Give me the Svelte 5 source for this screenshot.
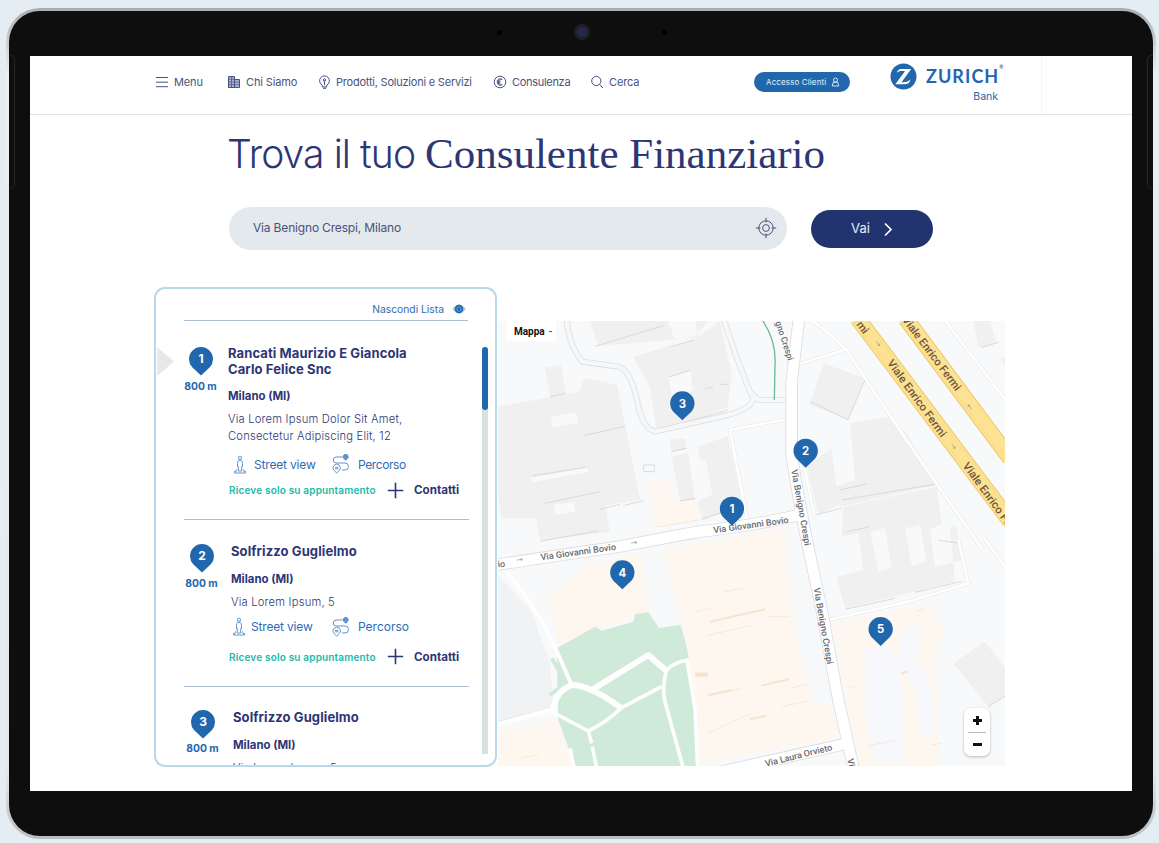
<script>
  const advisors = [
    { n: 1, name: ['Rancati Maurizio E Giancola', 'Carlo Felice Snc'], address: ['Via Lorem Ipsum Dolor Sit Amet,', 'Consectetur Adipiscing Elit, 12'] },
    { n: 2, name: ['Solfrizzo Guglielmo'], address: ['Via Lorem Ipsum, 5'] },
    { n: 3, name: ['Solfrizzo Guglielmo'], address: ['Via Lorem Ipsum, 5'] }
  ];
  const pins = [
    { n: 3, x: 562, y: 266 },
    { n: 2, x: 932, y: 408 },
    { n: 1, x: 711, y: 582 },
    { n: 4, x: 382, y: 773 },
    { n: 5, x: 1157, y: 943 }
  ];
</script>

<div class="stage">
  <div class="device">
    <div class="bezel">
      <div class="camera"><i></i><b></b><i></i></div>
      <div class="rail left"></div>
      <div class="rail right"></div>
      <div class="screen">
        <header>
          <nav>
            <a class="menu"><svg width="14" height="14" viewBox="0 0 14 14"><path d="M1 2.5h12M1 7.2h12M1 11.700h12" /></svg><span>Menu</span></a>
            <a class="chi"><svg width="14" height="14" viewBox="0 0 14 14"><path d="M1.500 12.500V1.500h6v11zM7.500 4.500h5v8h-11" fill="#aab1cf" /><path d="M1.500 4.200h6M1.500 7h11M1.500 9.700h11M4.500 1.500v11" stroke-width=".7" /></svg><span>Chi Siamo</span></a>
            <a class="prod"><svg width="13" height="14" viewBox="0 0 13 14"><path d="M4.300 10.200a4.900 4.900 0 1 1 4.400 0v1.800H4.300zM5 13.300h3M6.500 10.200V5.500" /><circle cx="6.500" cy="5" r="1.200" /></svg><span>Prodotti, Soluzioni e Servizi</span></a>
            <a class="cons"><svg width="14" height="14" viewBox="0 0 14 14"><circle cx="7" cy="7" r="5.800" /><path class="thick" d="M9.300 4.500C6.800 3 4.900 4.700 4.900 7s1.900 4 4.400 2.500M3.800 6.200h3.600M3.800 7.800h3.600" /></svg><span>Consulenza</span></a>
            <a class="cerca"><svg width="14" height="14" viewBox="0 0 14 14"><circle cx="6.300" cy="6" r="4.600" /><path d="M9.600 9.400l3.400 3.700" /></svg><span>Cerca</span></a>
          </nav>
          <button class="login"><span>Accesso Clienti</span><svg width="9" height="10" viewBox="0 0 9 10"><circle cx="4.500" cy="3" r="2" /><path d="M1.300 9L2.200 5.300h4.600L7.700 9z" /></svg></button>
          <div class="brand">
            <svg class="mark" width="27" height="27" viewBox="0 0 27 27"><circle cx="13.500" cy="13.500" r="13" fill="#2167ae" /><path d="M6.800 9.800C8 6.200 10 6 12 6h9.200L11.500 19.200c3 .2 6.200.2 8.900-2.600-.8 3.700-2.600 4.600-5.200 4.600H5.300L15 8.200C11.500 7.900 9 7.800 6.800 9.800z" fill="#fff" /></svg>
            <div class="words"><div class="z">ZURICH<sup>®</sup></div><div class="bank">Bank</div></div>
          </div>
          <div class="edge"></div>
        </header>

        <main>
          <h1><span class="t1">Trova il tuo</span><span class="t2">Consulente Finanziario</span></h1>
          <div class="search">
            <div class="field"><span>Via Benigno Crespi, Milano</span>
              <svg width="22" height="22" viewBox="0 0 22 22"><circle cx="11" cy="11" r="7.200" /><circle cx="11" cy="11" r="3.400" /><path d="M11 .8v4.600M11 16.600v4.600M.8 11h4.600M16.600 11h4.600" /></svg>
            </div>
            <button class="go"><span>Vai</span><svg width="10" height="15" viewBox="0 0 10 15"><path d="M2 1.500l6 6-6 6" /></svg></button>
          </div>

          <div class="finder">
            <section class="card">
              <div class="hide"><span>Nascondi Lista</span><svg width="14" height="10" viewBox="0 0 14 10"><path d="M.3 5Q3.500.5 7 .5T13.700 5Q10.500 9.500 7 9.500T.3 5z" fill="#a6c5e5" /><circle cx="7" cy="5" r="4.200" fill="#2167ae" /><circle cx="7" cy="5" r="2.200" fill="none" stroke="#7faddb" stroke-width=".8" /></svg></div>
              <div class="body">
                <div class="list">
                  {#each advisors as a (a.n)}
                    <article class="item i{a.n}">
                      <div class="where">
                        <svg width="24" height="29" viewBox="0 0 24 29"><path d="M12 28.500L3.200 20.200A12 12 0 1 1 20.800 20.200z" fill="#2167ae" /><text x="12" y="16.400">{a.n}</text></svg>
                        <span>800 m</span>
                      </div>
                      <div class="info">
                        <h2>{#each a.name as l}<span>{l}</span>{/each}</h2>
                        <h3>Milano (MI)</h3>
                        <p>{#each a.address as l}<span>{l}</span>{/each}</p>
                        {#if a.n < 3}
                          <div class="links">
                            <svg class="sv" width="14" height="19" viewBox="0 0 14 19"><circle cx="7" cy="2.800" r="1.600" /><path d="M5.500 5.300h3q1 1.200 1 3.200v3H8.700V16H5.300v-4.500h-.8v-3q0-2 1-3.200zM4 14.500l-1 .8v1.200H1.500V18h11v-1.500H11v-1.200l-1-.8" /></svg>
                            <span class="street">Street view</span>
                            <svg class="rt" width="18" height="20" viewBox="0 0 18 20"><path d="M10.500 3H4.300a2.800 2.800 0 0 0 0 6H13a3.300 3.300 0 0 1 0 7h-3M4.700 19L1.800 16.200A3.700 3.700 0 1 1 7.600 16.200zM3 13.300h3.400M3 14.800h3.400" /><path d="M13.700 6.300l-2-2a2.500 2.500 0 1 1 4 0z" fill="#5f93cb" /></svg>
                            <span class="route">Percorso</span>
                          </div>
                          <div class="more">
                            <em>Riceve solo su appuntamento</em>
                            <svg width="17" height="17" viewBox="0 0 17 17"><path d="M8.500 .8v15.400M.8 8.500h15.400" /></svg>
                            <strong>Contatti</strong>
                          </div>
                        {/if}
                      </div>
                    </article>
                  {/each}
                </div>
                <div class="track"><div class="thumb"></div></div>
              </div>
              <div class="pointer"></div>
            </section>

            <section class="map">
              <svg class="canvas" viewBox="9 18 1521 1335" preserveAspectRatio="none">
                <rect x="0" y="0" width="1540" height="1370" fill="#f8f9fa" />
                <!-- large blocks -->
                <path d="M9 780L110 890 165 1045 175 1175 9 1220z" fill="#f1f2f3" />
                <path d="M9 1250L190 1215 240 1353H9zM455 500l60-10 20 60 75-5v75l-130 15zM160 835l130-90 150-30 20 175-140 45-130 55z" fill="#fef7f0" />
                <path d="M500 705L790 650 870 640 900 780 985 1050 1030 1270 610 1345 590 1130 560 920z" fill="#fef7f0" />
                <path d="M1010 925l300-60 40 90-30 60 15 338h-240z" fill="#fef7f0" />
                <path d="M1110 1000l70-10 40 110 10 240h-90l-30-130zM1220 940l60-10-15 100 40 60 15 180h-45l-10-150-60-60z" fill="#f6f8fb" />
                <path d="M870 660l30 10 65 250 50 240-60 10-40-150-20-130z" fill="#f6f8fa" />
                <!-- buildings -->
                <g fill="#f0f0f0">
                  <path d="M285 18h235l20 60 60-15 40-45h-40l10 50-300 25z" />
                  <path d="M415 125l100-30 80-20 80-57 35 160-12 100-213 70-20-130z" />
                  <path d="M148 158l50-8 14 85-45 10z" />
                  <path d="M9 275l245-45 12-40 60 10 40 10 70 345-195 30 10 65-115 30-10-70-105 0-10-50-5-80-40-105L9 315z" />
                  <path d="M105 515l210-35 30 170-210 28z" />
                  <path d="M525 375l45-5 5 32-45 10zM530 422l50-8 20 140-45 4zM608 395l90-32 45 210-120 45-15-60 45-20-20-100-20-5z" />
                  <path d="M985 145l125 45-50 125-115-45zM1065 325l115-20 55 50 90 155-290 65-20-60 65-20zM935 450l75-50 20 170-60 30z" />
                  <path d="M1045 575l280-60 15 110-35 20 15 110 80-20-15-100-20 0 15 165-330 80-25-95 80-20-15-110-50 10z" />
                  <path d="M1375 1045l95-65 70 90v70l-60 35zM1435 18h50l20 65-55 15zM1515 130l25-5v50z" />
                </g>
                <g fill="#f8f9fa">
                  <path d="M168 305l75-13 8 32-78 12zM175 570l60-8 7 28-60 10zM520 188l66-22 8 60-62 20zM105 490l170-32 5 12-170 32z" />
                  <path d="M1125 650l45-10 20 120-40 10zM1230 640l45-10 20 110-45 12z" />
                </g>
                <g fill="none" stroke="#d9dadb" stroke-width="3">
                  <path d="M300 94L505 32M528 95l68-20M522 186l64-20M112 482l160-25M150 565l165-35M138 678l170-30M385 572l60-15M315 583l60-15M265 362l125-28M165 245l47-10M528 410l46-10M555 558l45-8M620 612l60-20M484 345l214-60M675 208h25M630 222l25-6M945 260l114 54 51-120M960 600l80-20M1040 555l285-48M1035 525l80-18M1055 650l70-15M1460 98l50-16M1050 883l150-33M1260 832l140-33M1480 1175l60-38M9 1220l160-43M1330 675l62 10" />
                  <path d="M446 450h32v20h-32z" />
                </g>
                <g fill="none" stroke="#f5e5cf" stroke-width="4">
                  <path d="M645 1142l95-22M690 830l55-10M600 890l45-10M892 1118l45-9M860 1175l80-17M635 1255l130-58M75 1330l55-12M1120 1292l80-15M1310 1290l30-6M1055 1118l25-5M1265 890l25-10M480 637l130-22M635 962l130-30M820 905l65 0" stroke-width="2.500" />
                  <path d="M645 920L810 883M640 1140l70-15M798 1112l85-20M765 1212l50-10M1218 1076l20-8" stroke-width="6" />
                  <path d="M600 1079h38" stroke-width="13" />
                </g>
                <!-- park -->
                <path d="M185 1000L300 935l20 12 95-27 5-22 40-7 32 48 65-10 20 75 30 230 5 119H240L190 1215z" fill="#cfead9" />
                <path d="M165 1140l45-35M170 1030l45 75" stroke="#cfead9" stroke-width="12" fill="none" />
                <g fill="none" stroke="#fdfefd" stroke-linejoin="round">
                  <path d="M20 755Q110 850 175 985L230 1110" stroke-width="12" />
                  <path d="M175 1185Q180 1130 230 1110Q285 1110 380 1180M290 1125L460 1020 515 1068" stroke-width="18" />
                  <path d="M170 1190L280 1248Q330 1225 380 1178L500 1115M280 1248L290 1285M292 1295l12 60M515 1065Q500 1120 510 1160L565 1360M515 1065Q540 1040 580 1035M575 1030L600 1180 608 1360M225 1300l12 60" stroke-width="11" />
                  <path d="M0 1230L175 1182" stroke-width="14" />
                </g>
                <!-- minor roads -->
                <g fill="none" stroke-linejoin="round">
                  <path d="M215 10Q220 90 262 140L370 155Q405 165 425 250Q440 340 480 350L700 300Q800 270 765 230Q720 120 685 10M765 230l25 25h90" stroke="#dedfe0" stroke-width="18" />
                  <path d="M215 10Q220 90 262 140L370 155Q405 165 425 250Q440 340 480 350L700 300Q800 270 765 230Q720 120 685 10M765 230l25 25h90" stroke="#f6f7f8" stroke-width="13" />
                  <path d="M755 605L705 345 880 312M940 10Q990 40 1055 105Q1200 330 1460 700M910 148L1065 100M1345 10L1535 260M1000 915L1240 860 1420 805 1390 675M1465 665L1540 770M928 455l30 145" stroke="#e6e7e8" stroke-width="11" />
                  <path d="M755 605L705 345 880 312M940 10Q990 40 1055 105Q1200 330 1460 700M910 148L1065 100M1345 10L1535 260M1000 915L1240 860 1420 805 1390 675M1465 665L1540 770M928 455l30 145" stroke="#fff" stroke-width="8" />
                  <path d="M802 15Q845 80 840 150L838 255" stroke="#6dbb99" stroke-width="4" />
                </g>
                <!-- main streets -->
                <g fill="none" stroke-linejoin="round">
                  <g stroke="#dcdddf" stroke-width="37">
                    <path d="M0 750Q250 712 370 695L600 652Q800 628 910 600M600 1388L1045 1288" />
                    <path d="M912 10L890 200V420Q905 520 935 675L980 885 1030 1155 1078 1370" />
                  </g>
                  <g stroke="#fff" stroke-width="32">
                    <path d="M0 750Q250 712 370 695L600 652Q800 628 910 600M600 1388L1045 1288" />
                    <path d="M912 10L890 200V420Q905 520 935 675L980 885 1030 1155 1078 1370" />
                  </g>
                </g>
                <!-- avenue -->
                <g fill="none">
                  <path d="M1088 10L1545 618M1232 10L1545 430" stroke="#eccb6b" stroke-width="49" />
                  <path d="M1088 10L1545 618M1232 10L1545 430" stroke="#fde293" stroke-width="43" />
                  <path d="M1076 18L1533 626M1100 2L1557 610M1220 18L1533 438" stroke="#f2d277" stroke-width="2" stroke-dasharray="4 3" />
                </g>
                <g class="arrows">
                  <text transform="translate(1136 82) rotate(53)">→</text><text transform="translate(1363 390) rotate(53)">→</text><text transform="translate(1436 280) rotate(-127)">→</text>
                  <text transform="translate(65 743) rotate(-8)">→</text><text transform="translate(408 692) rotate(-8)">→</text>
                </g>
                <g class="streets">
                  <text transform="translate(138 736) rotate(-8)" textLength="228" lengthAdjust="spacingAndGlyphs">Via Giovanni Bovio</text>
                  <text transform="translate(656 655) rotate(-8)" textLength="228" lengthAdjust="spacingAndGlyphs">Via Giovanni Bovio</text>
                  <text transform="translate(9 757) rotate(-5)">io</text>
                  <text transform="translate(889 465) rotate(80)" textLength="232" lengthAdjust="spacingAndGlyphs">Via Benigno Crespi</text>
                  <text transform="translate(956 820) rotate(80)" textLength="232" lengthAdjust="spacingAndGlyphs">Via Benigno Crespi</text>
                  <text transform="translate(841 22) rotate(72)" textLength="122" lengthAdjust="spacingAndGlyphs">gno Crespi</text>
                  <text transform="translate(813 1355) rotate(-14)" textLength="206" lengthAdjust="spacingAndGlyphs">Via Laura Orvieto</text>
                  <text transform="translate(1057 1333) rotate(78)">Vi</text>
                </g>
                <g class="avenue">
                  <text transform="translate(1083 29) rotate(53)">mi</text>
                  <text transform="translate(1175 144) rotate(54)" textLength="278" lengthAdjust="spacingAndGlyphs">Viale Enrico Fermi</text>
                  <text transform="translate(1220 14) rotate(53)" textLength="270" lengthAdjust="spacingAndGlyphs">Viale Enrico Fermi</text>
                  <text transform="translate(1402 452) rotate(54)" textLength="278" lengthAdjust="spacingAndGlyphs">Viale Enrico Fermi</text>
                </g>
                <g class="pins">
                  {#each pins as p (p.n)}
                    <g transform="translate({p.x} {p.y})"><path d="M0 50L-27 24A36.500 36.500 0 1 1 27 24z" fill="#2167ae" /><text y="12">{p.n}</text></g>
                  {/each}
                </g>
              </svg>
              <div class="type">Mappa <i></i></div>
              <div class="zoom"><span class="plus"></span><hr /><span class="minus"></span></div>
            </section>
          </div>
        </main>
      </div>
    </div>
  </div>
</div>

<style>
  :global(body) { margin: 0; overflow: hidden; }
  .stage { width: 1159px; height: 843px; background: #e4edf3; box-sizing: border-box; padding: 8px 3px 4px 6px; font-family: Inter, "Liberation Sans", sans-serif; color: #2e3575; overflow: hidden; }
  .device { height: 831px; box-sizing: border-box; border-radius: 34px; padding: 3px; background: linear-gradient(#aaadaf, #eceff0 8%, #e4e7e8 92%, #b9bdc0); }
  .bezel { position: relative; height: 825px; box-sizing: border-box; border-radius: 31px; background: #0e0e0e; padding: 45px 21px 45px 21px; }
  .camera { position: absolute; left: 488px; top: 13px; width: 170px; height: 16px; display: flex; align-items: center; justify-content: space-between; }
  .camera b { width: 10px; height: 10px; border-radius: 50%; border: 3px solid #1f2027; background: #25284b; }
  .camera i { width: 5px; height: 5px; border-radius: 50%; background: #000; }
  .rail { position: absolute; top: 44px; height: 134px; width: 5px; border: 1px solid #292624; box-sizing: border-box; }
  .rail.left { left: 1px; border-left: 0; border-radius: 0 5px 5px 0; }
  .rail.right { right: 1px; border-right: 0; border-radius: 5px 0 0 5px; }
  .screen { height: 735px; background: #fff; overflow: hidden; }
  header { height: 58px; border-bottom: 1px solid #dfe2e5; display: flex; align-items: flex-start; padding-left: 125px; }
  nav { display: grid; grid-template-columns: 72px 91px 175px 97px 65px; width: 599px; height: 14px; margin-top: 19px; font-size: 11px; line-height: 15px; }
  nav a { display: flex; white-space: nowrap; color: #48527f; letter-spacing: -.12px; }
  nav .prod { letter-spacing: -.22px; }
  nav .cons { letter-spacing: -.3px; }
  nav svg, .login svg, .field svg, .go svg { fill: none; stroke: #48527f; stroke-width: 1; flex: none; }
  nav .thick { stroke-width: 1.300; }
  nav span { margin-left: 5px; }
  .login { all: unset; box-sizing: border-box; display: flex; align-items: center; width: 96px; height: 20px; margin-top: 16px; border-radius: 10px; background: #2167ae; color: #e4eff9; font-size: 8px; letter-spacing: .12px; padding-left: 12px; white-space: nowrap; }
  .login svg { stroke: #e4eff9; stroke-width: .9; margin-left: 5px; }
  .brand { display: flex; margin: 7px 0 0 40px; width: 151px; color: #2167ae; }
  .words { margin-left: 9px; width: 72px; }
  .z { font: 700 18px/20px Lato, sans-serif; letter-spacing: 1.050px; margin-top: 3px; height: 20px; white-space: nowrap; }
  .z sup { font-size: 5px; vertical-align: 14px; line-height: 0; letter-spacing: 0; }
  .bank { font-size: 10.500px; line-height: 13px; margin-top: 4px; text-align: right; }
  .edge { width: 1px; height: 58px; background: #f4f5f6; }
  main { padding-left: 124px; }
  h1 { margin: 0 0 0 75px; height: 92px; display: flex; font-weight: 300; white-space: nowrap; line-height: 50px; padding-top: 14px; box-sizing: border-box; }
  .t1 { font-size: 39px; letter-spacing: -.900px; width: 198px; margin-left: -2px; }
  .t2 { font: 400 43px/50px "Liberation Serif", serif; }
  .search { display: flex; margin-left: 75px; }
  .field { width: 558px; height: 43px; border-radius: 22px; background: #e3e9ec; display: flex; align-items: center; justify-content: space-between; padding: 0 10px 1px 24px; box-sizing: border-box; font-size: 12px; letter-spacing: -.17px; color: #48527f; }
  .field span { margin-top: -2px; }
  .go { all: unset; display: flex; align-items: center; justify-content: center; gap: 13px; width: 122px; height: 38px; margin: 3px 0 0 24px; border-radius: 19px; background: #22346f; color: #e9edf7; font-size: 13px; }
  .go span { margin-top: -2px; }
  .go svg { stroke: #fff; stroke-width: 1.700; }
  .finder { display: flex; margin-top: 37px; }
  .card { position: relative; width: 343px; height: 480px; box-sizing: border-box; border: 2px solid #b9d8ec; border-radius: 11px; background: #fff; overflow: hidden; }
  .hide { display: flex; align-items: center; justify-content: flex-end; height: 32px; width: 284px; margin-left: 28px; box-sizing: border-box; border-bottom: 1px solid #a9bfd6; padding: 9px 2px 0 0; font-size: 10.300px; color: #2f6cb3; gap: 8px; }
  .body { display: flex; height: 444px; }
  .list { width: 313px; padding-left: 28px; box-sizing: border-box; overflow: hidden; }
  .item { display: flex; box-sizing: border-box; width: 285px; border-bottom: 1px solid #a9bfd6; }
  .i1 { height: 199px; padding-top: 25px; }
  .i2 { height: 167px; padding: 24px 0 0 1px; }
  .i3 { height: 167px; padding: 23px 0 0 2px; }
  .where { width: 33px; flex: none; display: flex; flex-direction: column; align-items: center; padding-top: 1px; }
  .i2 .where, .i3 .where { padding-top: 0; }
  .where text, .pins text { fill: #fff; font-weight: 700; text-anchor: middle; }
  .where text { font-size: 12px; }
  .where span { font-size: 10.300px; line-height: 14px; font-weight: 700; color: #2467af; white-space: nowrap; margin-top: 3px; }
  .i3 .where span { margin-top: 2px; }
  .info { margin-left: 11px; width: 240px; white-space: nowrap; }
  .i2 .info { margin-left: 13px; }
  .i3 .info { margin-left: 14px; }
  h2, h3, p { margin: 0; }
  h2 span, p span { display: block; }
  h2 { font-size: 13px; line-height: 15.500px; font-weight: 700; letter-spacing: .1px; }
  h3 { font-size: 11.400px; line-height: 16px; font-weight: 700; margin-top: 11px; }
  .i2 h3, .i3 h3 { margin-top: 11.500px; }
  p { font-size: 11.200px; line-height: 17px; font-weight: 300; letter-spacing: .2px; margin-top: 6.500px; color: #2e3575; }
  .links { display: flex; align-items: center; height: 20px; margin-top: 9.500px; font-size: 12px; letter-spacing: -.17px; color: #2f6cb3; }
  .links svg { fill: none; stroke: #5f93cb; stroke-width: 1; flex: none; }
  .i1 .sv { margin-left: 5px; } .i2 .sv { margin-left: 1px; }
  .street { margin-left: 7px; width: 78px; }
  .i2 .street { margin-left: 5px; width: 81px; }
  .route { margin-left: 8px; }
  .i1 .route { letter-spacing: -.4px; }
  .i2 .route { letter-spacing: 0; }
  .more { display: flex; align-items: center; height: 20px; margin-top: 6px; margin-left: 1px; }
  .i2 .links { margin-top: 6px; }
  .i2 .more { margin-top: 10px; margin-left: -2px; }
  .more em { font-style: normal; font-weight: 600; font-size: 10px; letter-spacing: .17px; color: #20b9a9; width: 158px; }
  .more svg { stroke: #2e3575; stroke-width: 1.600; flex: none; }
  .more strong { font-size: 11.600px; font-weight: 700; margin-left: 10px; }
  .track { width: 6px; height: 407px; margin: 26px 0 0 13px; background: #d6e2df; border-radius: 3px 3px 0 0; }
  .thumb { height: 63px; border-radius: 3px; background: #2167ae; }
  .pointer { position: absolute; left: 1px; top: 58px; width: 17px; height: 29px; background: #e8e8e8; clip-path: polygon(0 0, 100% 50%, 0 100%); }
  .map { position: relative; width: 507px; height: 445px; margin: 34px 0 0 1px; }
  .canvas { display: block; width: 507px; height: 445px; }
  .streets text { font: 500 27px Roboto, sans-serif; fill: #696c6f; stroke: #fff; stroke-width: 4; paint-order: stroke; }
  .avenue text { font: 500 33px Roboto, sans-serif; fill: #70553d; }
  .arrows text { font: 24px "DejaVu Sans", sans-serif; fill: #9a9a94; }
  .pins text { font-size: 34px; }
  .type { position: absolute; left: 8px; top: 0; width: 50px; height: 20px; box-sizing: border-box; background: #fff; font: 700 10px/21px Roboto, sans-serif; color: #111; display: flex; align-items: center; padding-left: 8px; gap: 4px; }
  .type i { width: 3px; height: 1px; background: #555; }
  .zoom { position: absolute; left: 466px; top: 387px; width: 26px; height: 48px; border-radius: 7px; background: #fff; box-shadow: 0 1px 3px #0004; display: flex; flex-direction: column; align-items: center; justify-content: center; gap: 7px; }
  .zoom hr { width: 18px; height: 1px; border: 0; margin: 0; background: #bbb; }
  .plus, .minus { width: 9px; height: 9px; background: linear-gradient(#111, #111) center / 9px 3px no-repeat; }
  .plus { background: linear-gradient(#111, #111) center / 9px 3px no-repeat, linear-gradient(#111, #111) center / 3px 9px no-repeat; }
</style>
